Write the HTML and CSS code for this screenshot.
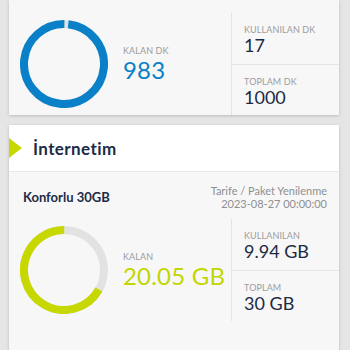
FILE: index.html
```html
<!DOCTYPE html>
<html lang="tr">
<head>
<meta charset="utf-8">
<link rel="stylesheet" href="styles.css">
</head>
<body>
<div class="page">
  <section class="card card-voice">
    <div class="stats">
      <div class="stats-main">
        <svg class="donut" viewBox="0 0 88 88" width="88" height="88">
          <circle class="ring-bg" cx="44" cy="44" r="40"></circle>
          <circle class="ring-blue" cx="44" cy="44" r="40" style="stroke-dasharray: 247.0 251.33; transform: rotate(-83.9deg);"></circle>
        </svg>
        <div class="main-text">
          <div class="label">KALAN DK</div>
          <div class="big blue">983</div>
        </div>
      </div>
      <div class="stats-side">
        <div class="side-row">
          <div class="label">KULLANILAN DK</div>
          <div class="value">17</div>
        </div>
        <div class="side-row">
          <div class="label">TOPLAM DK</div>
          <div class="value">1000</div>
        </div>
      </div>
    </div>
  </section>

  <section class="card card-net">
    <header class="card-head">
      <span class="marker"></span>
      <h2 class="title">İnternetim</h2>
    </header>
    <div class="card-body">
      <div class="info">
        <div class="plan">Konforlu 30GB</div>
        <div class="renew">
          <div>Tarife / Paket Yenilenme</div>
          <div>2023-08-27 00:00:00</div>
        </div>
      </div>
      <div class="stats">
        <div class="stats-main">
          <svg class="donut" viewBox="0 0 88 88" width="88" height="88">
            <circle class="ring-bg" cx="44" cy="44" r="40"></circle>
            <circle class="ring-lime" cx="44" cy="44" r="40" style="stroke-dasharray: 167.96 251.33; transform: rotate(29.3deg);"></circle>
          </svg>
          <div class="main-text">
            <div class="label">KALAN</div>
            <div class="big lime">20.05 GB</div>
          </div>
        </div>
        <div class="stats-side">
          <div class="side-row">
            <div class="label">KULLANILAN</div>
            <div class="value">9.94 GB</div>
          </div>
          <div class="side-row">
            <div class="label">TOPLAM</div>
            <div class="value">30 GB</div>
          </div>
        </div>
      </div>
    </div>
  </section>
</div>
</body>
</html>
```

FILE: styles.css
```css
* { box-sizing: border-box; }
html, body { margin: 0; padding: 0; }
body {
  background: #e5e5e5;
  font-family: Lato, "Open Sans", sans-serif;
  color: #1c2a45;
  width: 350px;
  height: 350px;
  overflow: hidden;
}
.page {
  padding: 0 11px 0 9px;
  display: flex;
  flex-direction: column;
  gap: 10px;
}
.card {
  background: #f7f7f7;
  box-shadow: 0 1px 3px rgba(0, 0, 0, 0.18);
}
.card-voice {
  height: 115px;
  padding-top: 13px;
}
.stats {
  display: grid;
  grid-template-columns: 222px 1fr;
}
.stats-main {
  display: flex;
  align-items: center;
  padding-left: 11px;
  gap: 15px;
}
.donut { display: block; flex: none; }
.donut circle {
  fill: none;
  stroke-width: 8;
  transform-origin: 44px 44px;
}
.ring-bg { stroke: #e2e2e2; }
.ring-blue { stroke: #0a80c8; }
.ring-lime { stroke: #c6d800; }
.label {
  font-size: 9px;
  line-height: 11px;
  color: #9c9c9c;
  letter-spacing: 0.1px;
}
.big {
  font-size: 24px;
  line-height: 28px;
  letter-spacing: 0.2px;
}
.blue { color: #0a80c8; }
.lime { color: #c2d600; }
.stats-side {
  border-left: 1px solid #e4e4e4;
  height: 102px;
  display: flex;
  flex-direction: column;
}
.side-row {
  flex: 1;
  padding: 11px 0 0 12px;
}
.side-row + .side-row { border-top: 1px solid #e4e4e4; }
.value {
  font-size: 18px;
  line-height: 20px;
  color: #1c2a45;
}
.card-net { height: 240px; }
.card-head {
  background: #ffffff;
  height: 47px;
  border-bottom: 1px solid #e8e8e8;
  display: flex;
  align-items: center;
}
.marker {
  width: 0;
  height: 0;
  border-top: 10.5px solid transparent;
  border-bottom: 10.5px solid transparent;
  border-left: 13px solid #c6d800;
}
.title {
  margin: 0 0 0 11px;
  font-size: 17px;
  font-weight: 700;
  letter-spacing: 0.4px;
  color: #1c2a45;
}
.card-body { padding-top: 12px; }
.info {
  display: flex;
  justify-content: space-between;
  align-items: center;
  padding: 0 12px 0 14px;
  margin-bottom: 9px;
}
.plan {
  font-size: 13px;
  font-weight: 700;
  color: #1c2a45;
}
.renew {
  text-align: right;
  font-size: 11px;
  line-height: 13px;
  color: #8f8f8f;
}
```
